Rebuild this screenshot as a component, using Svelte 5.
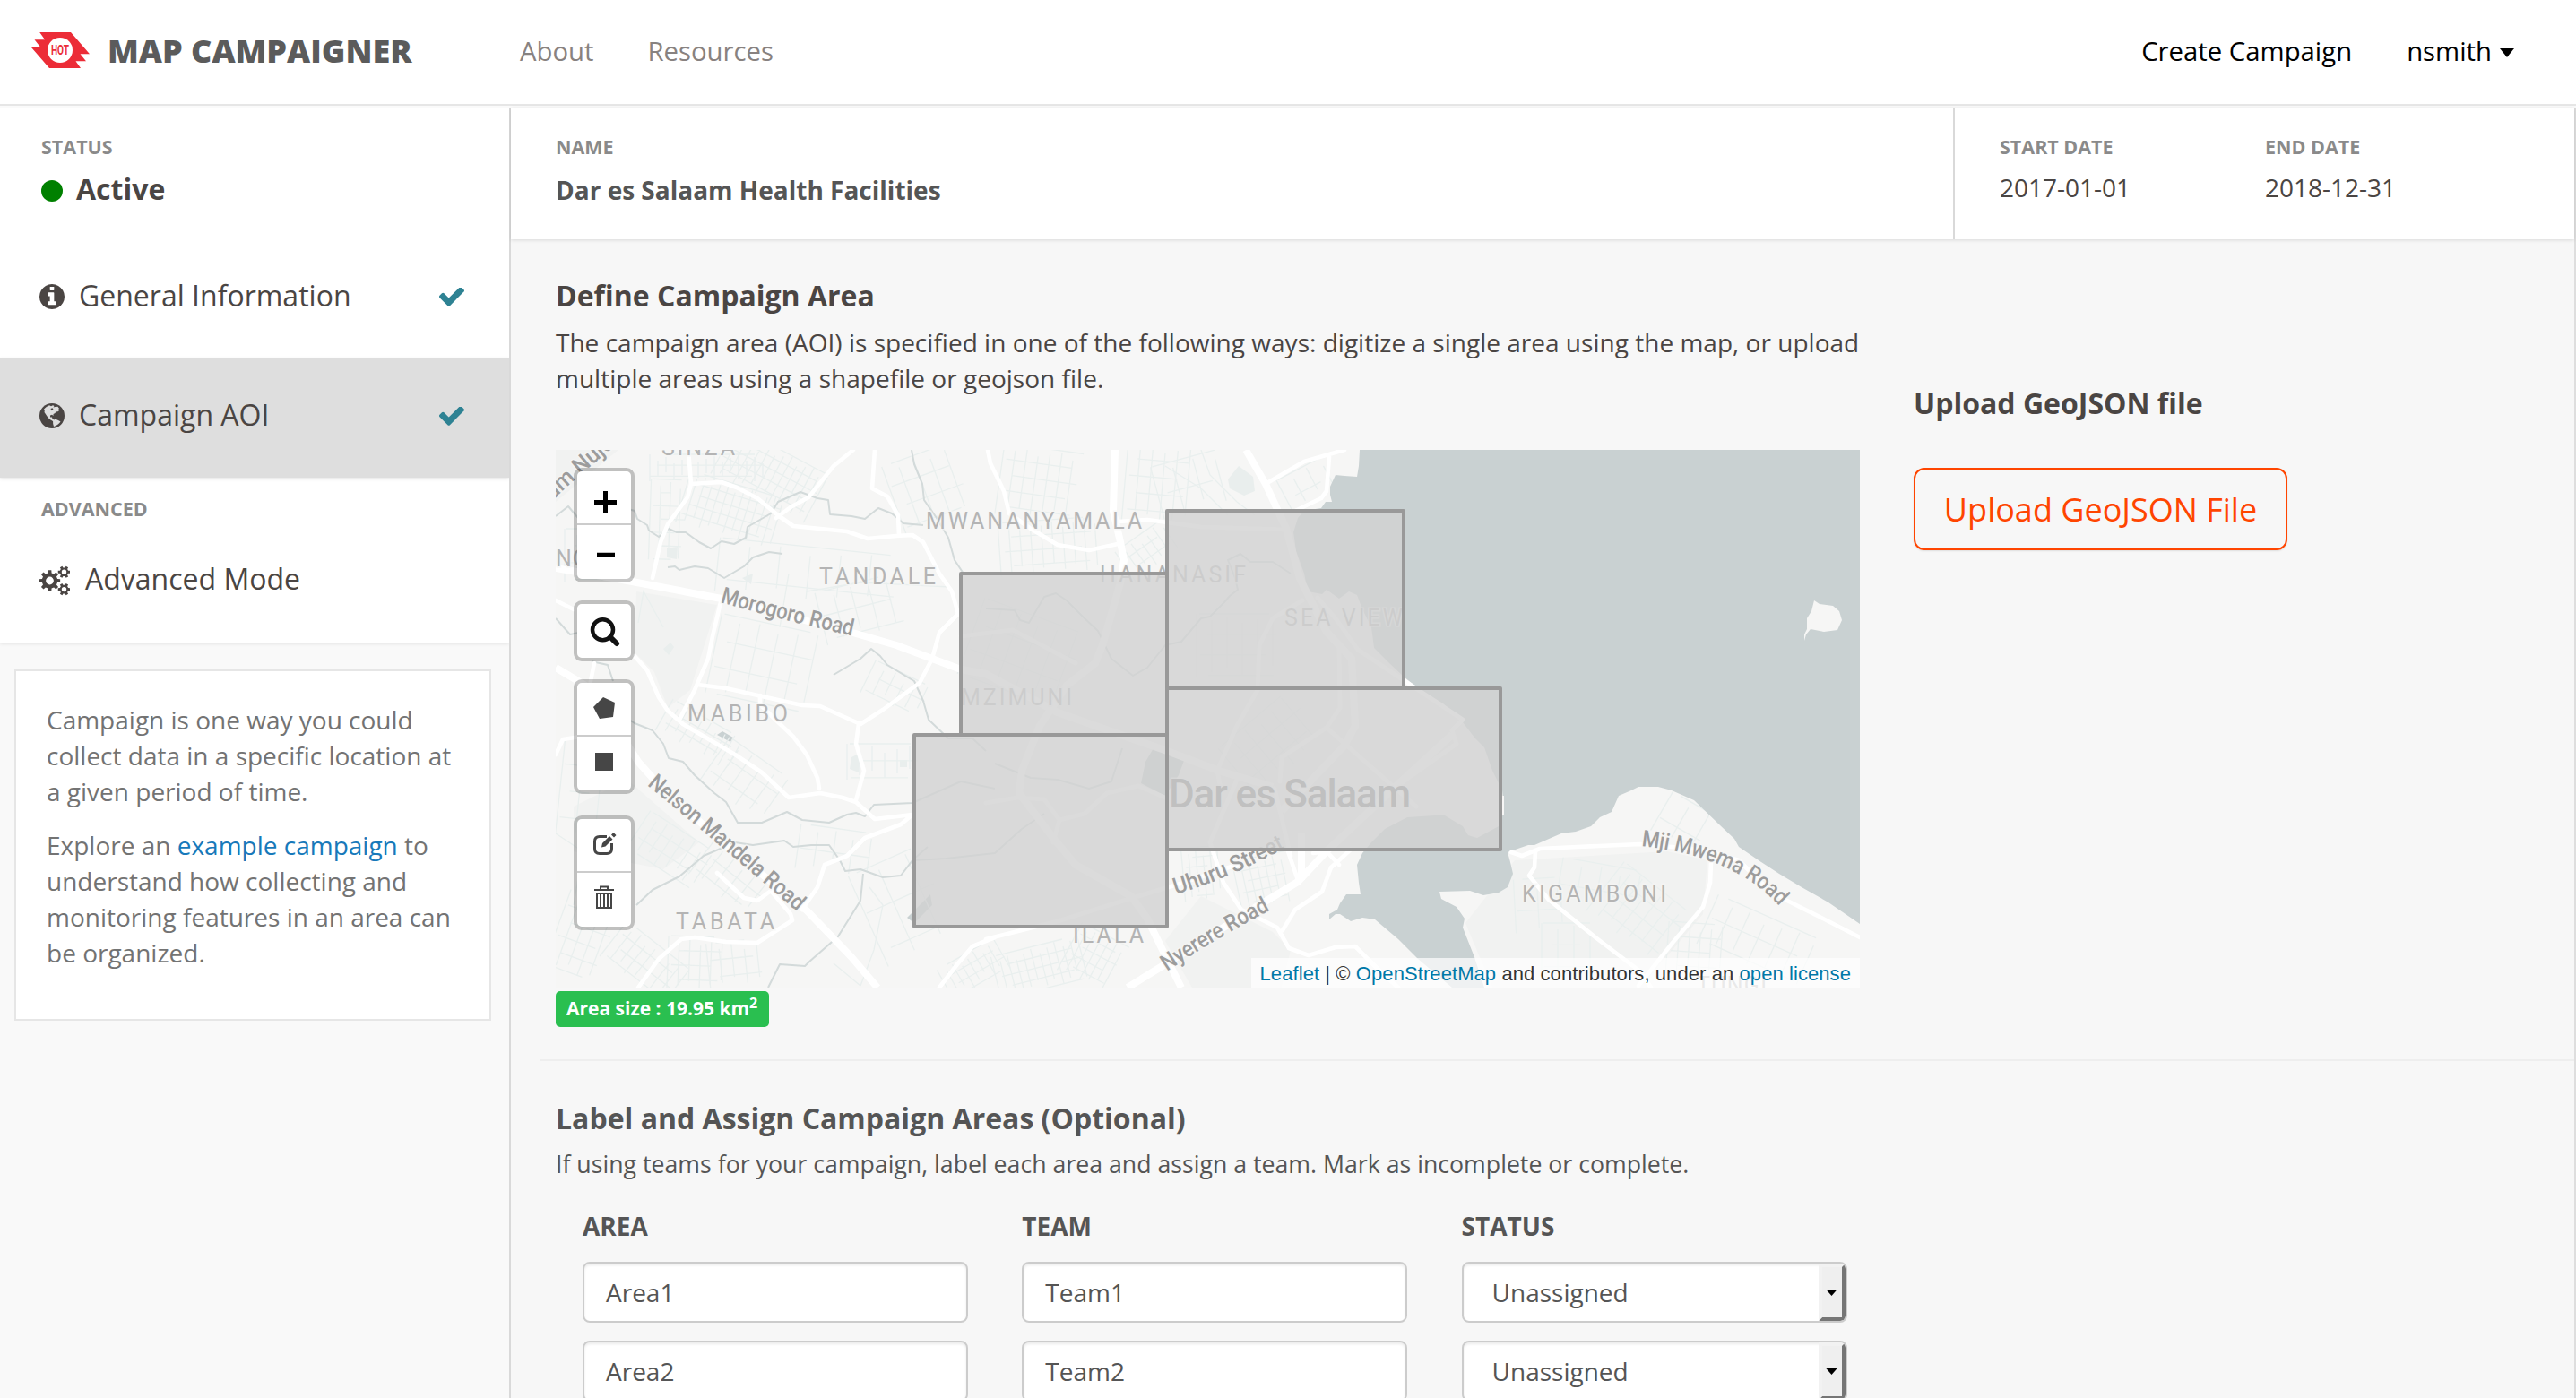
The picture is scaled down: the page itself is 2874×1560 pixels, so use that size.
<script>
  const areas = [
    { area: 'Area1', team: 'Team1', status: 'Unassigned' },
    { area: 'Area2', team: 'Team2', status: 'Unassigned' }
  ];

  // Outline of a toothed wheel with a round hole, for the settings icon.
  function gear(cx, cy, outer, root, hole, teeth) {
    const step = (Math.PI * 2) / teeth;
    const pt = (r, a) => `${(cx + r * Math.cos(a)).toFixed(2)} ${(cy + r * Math.sin(a)).toFixed(2)}`;
    const pts = [];
    for (let i = 0; i < teeth; i++) {
      const a = i * step;
      pts.push(pt(root, a - step * 0.3), pt(outer, a - step * 0.2), pt(outer, a + step * 0.2), pt(root, a + step * 0.3));
    }
    return `M${pts.join('L')}Z M${cx - hole} ${cy}a${hole} ${hole} 0 1 0 ${hole * 2} 0a${hole} ${hole} 0 1 0 ${-hole * 2} 0Z`;
  }

  const land = '#f6f6f5';
  const water =
    'M1517 502L1516 520L1514 532L1500 531L1490 530L1484 543L1484 552L1486 560L1479 560L1474 567L1455 570L1448 578L1443 594L1446 615L1455 640L1459 660L1475 663L1480 658L1494 668L1505 660L1514 664L1520 680L1530 700L1533 723L1550 740L1566 755L1582 768L1590 773L1610 785L1632 806L1645 823L1656 834L1665 860L1676 882L1678 905L1672 922L1648 935L1638 932L1632 922L1612 910L1600 910L1570 912L1545 925L1530 940L1520 952L1514 965L1516 985L1518 998L1502 998L1495 1008L1492 1015L1483 1020L1483 1026L1490 1020L1495 1020L1507 1028L1520 1024L1534 1026L1560 1048L1582 1070L1620 1102L1656 1102L1645 1068L1632 1035L1634 1025L1625 1012L1608 1003L1606 995L1640 994L1655 999L1672 996L1682 990L1688 975L1685 962L1682 951L1705 943L1712 943L1742 930L1758 928L1775 922L1785 912L1798 906L1806 888L1820 882L1828 878L1850 878L1865 882L1890 893L1918 920L1935 936L1940 945L1965 962L1985 975L2010 990L2040 1007L2075 1031L2075 502Z';
  const island = 'M2024 670L2030 674L2045 676L2052 682L2055 692L2050 703L2035 705L2020 702L2015 708L2013 715L2013 708L2016 702L2016 690L2021 682Z';

  const streams = [
    'M620 576L634 565L645 578L672 566',
    'M690 565L708 570L711 579L722 586L724 592L735 599L746 590L755 594L765 594L780 605L793 612L805 604L819 607L832 600L834 588L860 573L868 560L893 549L912 556L924 558L926 574L950 576L965 579L980 567L995 573L1008 584L1030 586',
    'M745 633L753 632L758 636L775 632L790 634L808 645L830 632L840 622L858 616L873 618',
    'M1017 502L1020 518L1029 540L1031 558L1045 578L1058 600L1065 625L1075 640',
    'M930 753L945 744L960 735L972 724L982 732L990 742L1020 760L1030 782L1036 803L1058 824L1085 824L1100 838',
    'M620 690L636 708L650 705',
    'M660 738L678 742L684 760M690 795L708 807L728 815L740 830L746 846L762 850L775 865L797 885L810 895L823 918L850 918L878 906L895 915L925 918L945 909L955 907L965 911L975 898L1018 896L1072 872L1110 880',
    'M710 1010L728 993L758 978L785 955L820 940L840 943L875 938L885 945L905 943L925 943L937 960L943 972L960 970L985 979L1005 977L1018 960L1035 945',
    'M963 975L960 1005L935 1045L903 1073L898 1078L870 1076L857 1102',
    'M1100 679L1132 681L1138 692L1148 695L1165 666L1178 662L1190 670L1210 690L1225 704L1240 735L1264 754L1280 745L1300 720L1318 716L1340 690L1350 688L1366 672L1372 665L1381 658L1378 645L1370 625L1384 618L1395 627L1420 627L1440 640',
    'M1110 852L1150 868L1180 870L1215 880L1240 872L1252 835',
    'M1020 960L1055 958L1110 952L1140 925L1165 908'
  ];

  const roads = [
    'M768 502L771 540L767 555L745 585L737 605L728 645',
    'M771 540L805 538L822 544L845 556L868 575L885 587L945 593L968 601L1000 598L1018 597L1030 605L1048 640L1062 660L1069 685L1048 706L1040 735L1026 762L985 792L960 808L915 788L895 787L850 777L810 768L778 764',
    'M952 502L930 520L902 555L882 566L866 578',
    'M976 502L973 545L990 554L1002 575L1003 597',
    'M804 672L795 710L790 735L775 770L758 803',
    'M620 670L640 680M708 732L722 748L735 778L745 793L762 808L820 842L850 862L880 890L915 885L940 890L955 895L976 914L1018 909L1005 920L965 935L945 955L920 965L912 990L895 1015',
    'M958 808L955 830L964 860L955 893',
    'M862 800L885 822L900 842L912 868L914 880M848 776L848 786L862 800',
    'M658 765L663 740M620 842L628 825L648 822',
    'M800 974L830 1002L845 1005L860 994L882 1020L884 1027L845 1052L810 1051L775 1046L760 1048L735 1070L712 1102',
    'M1110 1046L1085 1056L1068 1076L1048 1102M1100 1048L1180 1028L1260 1003L1320 985L1380 965',
    'M1102 502L1105 517L1120 548L1126 573L1150 590L1180 608L1215 614L1247 607',
    'M1247 582L1280 580L1340 588L1435 591',
    'M1412 540L1455 515L1500 502M1483 510L1480 548L1474 556L1445 570',
    'M1470 667L1490 690L1515 725L1560 755L1632 803L1620 815L1625 830L1540 890',
    'M1453 670L1420 690L1405 720L1403 770L1380 810L1358 860L1362 880M1494 720L1495 790L1480 812L1430 845L1428 872',
    'M1072 710L1130 703L1200 740M1380 870L1350 940L1365 985L1385 1015L1425 1035L1438 1058L1460 1066L1490 1057L1512 1056L1540 1084L1560 1102',
    'M1431 1038L1445 1015L1475 995L1485 968L1507 948',
    'M1437 950L1448 982M1465 952L1480 950L1494 965M1422 880L1440 955M1480 812L1580 900',
    'M1100 896L1135 890L1165 892L1182 915L1210 908L1235 885L1270 877L1300 890M1182 915L1175 940',
    'M1686 951L1698 955L1718 947L1760 945L1830 942L1900 948L1940 960L1965 985L1990 1003L2030 1023L2075 1046',
    'M1713 950L1712 968L1706 977L1728 1004L1780 1046L1830 1084L1842 1102',
    'M1909 962L1908 985L1900 1012L1866 1052L1828 1100'
  ];
  const highways = [
    'M620 634L700 648L805 668L955 707L1000 720L1072 747L1100 752L1180 795L1302 838L1360 860L1420 878',
    'M620 745L655 766L690 815L712 850L728 868L800 935L900 1016L950 1068L979 1102',
    'M1244 502L1242 570L1250 605L1254 625L1250 650L1230 720L1222 740L1190 765L1160 810L1140 860L1137 885L1175 935L1200 965L1262 1000L1280 1025L1298 1062L1318 1102',
    'M1390 502L1412 540L1435 590L1450 645L1480 705L1508 735L1512 810L1500 832L1430 905',
    'M1258 1102L1300 1076L1400 1013L1448 984L1480 950L1560 875L1620 820M1452 982L1452 930'
  ];

  // Patches of small streets: centre, size, rotation and spacing.
  const patches = [
    [790, 522, 130, 30, 0, 9], [860, 530, 120, 60, 28, 9], [745, 580, 40, 90, 2, 11], [815, 570, 110, 60, 17, 9],
    [1035, 545, 80, 80, -20, 18], [1160, 540, 90, 80, 8, 13], [1170, 610, 110, 60, -4, 12], [1290, 540, 70, 90, 5, 14],
    [1280, 615, 60, 40, -35, 10], [1330, 540, 80, 60, -15, 24], [1460, 540, 60, 40, -28, 18], [900, 640, 200, 60, 6, 34],
    [850, 740, 110, 90, 12, 22], [960, 680, 90, 60, -14, 20], [1000, 770, 70, 40, 26, 13], [780, 820, 90, 40, 30, 10],
    [830, 870, 80, 60, 35, 16], [985, 850, 80, 40, 0, 14], [750, 950, 90, 50, 33, 12], [815, 980, 80, 50, 38, 15],
    [650, 1045, 60, 90, 20, 13], [720, 1075, 90, 50, 38, 11], [775, 1075, 60, 60, 2, 12], [820, 1075, 60, 50, -6, 14],
    [935, 950, 90, 50, 8, 20], [1010, 1010, 90, 110, -24, 34], [1090, 1080, 80, 40, -30, 9], [1160, 1080, 100, 50, -14, 9],
    [1220, 1070, 60, 60, 28, 9], [1340, 975, 40, 60, -5, 8], [1410, 985, 60, 60, -12, 9], [655, 620, 50, 60, 0, 14],
    [650, 880, 50, 110, 6, 22], [1750, 1060, 60, 60, 0, 18], [1830, 1020, 100, 70, 38, 14], [1790, 985, 100, 40, 10, 22],
    [1960, 1050, 120, 60, 24, 20], [1890, 1060, 60, 60, 4, 12], [1880, 920, 60, 50, 30, 24], [1720, 1010, 60, 60, -3, 26],
    [1140, 730, 120, 90, 20, 22], [1380, 720, 90, 70, 0, 17], [1420, 830, 100, 70, -40, 18]
  ];
  function hatch([x, y, w, h, , s]) {
    let d = '';
    let i = 0;
    for (let a = -w / 2; a <= w / 2; a += s, i++) d += `M${x + a} ${y - h / 2 + ((i * 7) % 11)}V${y + h / 2 - ((i * 5) % 13)}`;
    for (let b = -h / 2; b <= h / 2; b += s * 1.35, i++) d += `M${x - w / 2 + ((i * 9) % 17)} ${y + b}H${x + w / 2 - ((i * 11) % 19)}`;
    return d;
  }

  const districts = [
    ['SINZA', 738, 508, 82], ['MWANANYAMALA', 1033, 590, 241], ['TANDALE', 914, 652, 130], ['MABIBO', 767, 805, 112],
    ['HANANASIF', 1227, 650, 163], ['SEA VIEW', 1433, 698, 132], ['MZIMUNI', 1072, 787, 124], ['TABATA', 754, 1037, 110],
    ['ILALA', 1197, 1052, 79], ['KIGAMBONI', 1698, 1006, 161], ['TUNGI', 1893, 1108, 78], ['NGO', 620, 632, 54]
  ];
  const streets = [
    ['sam', 'M617 558Q650 525 740 455', 'am Nujoma', 128],
    ['morogoro', 'M803 672Q880 694 953 710', 'Morogoro Road', 152],
    ['mandela', 'M722 876Q802 942 888 1016', 'Nelson Mandela Road', 219],
    ['uhuru', 'M1312 998Q1370 981 1436 945', 'Uhuru Street', 133],
    ['nyerere', 'M1302 1084Q1355 1048 1420 1014', 'Nyerere Road', 134],
    ['mji', 'M1831 944Q1935 955 1986 1012', 'Mji Mwema Road', 172]
  ];

  const check =
    'M1671 566q0 40-28 68l-724 724-136 136q-28 28-68 28t-68-28l-136-136-362-362q-28-28-28-68t28-68l136-136q28-28 68-28t68 28l294 295 656-657q28-28 68-28t68 28l136 136q28 28 28 68z';
</script>

<div class="page">
  <header>
    <svg class="logo" viewBox="34 35 67 42">
      <path fill="#ec2c37" d="M44.2 36L50 44.3H38.5L44.8 52.3H34.4L55 76H90L84.5 68.3H96L89.5 60.3H100L79 36Z" />
      <circle cx="67" cy="56" r="14" fill="#fff" />
      <text x="57" y="61.3" textLength="20" lengthAdjust="spacingAndGlyphs">HOT</text>
    </svg>
    <div class="brand">MAP CAMPAIGNER</div>
    <nav>
      <span>About</span>
      <span>Resources</span>
    </nav>
    <div class="account">
      <span>Create Campaign</span>
      <span class="user">nsmith<i class="caret"></i></span>
    </div>
  </header>

  <div class="body">
    <aside>
      <div class="panel">
        <div class="status">
          <div class="caption">STATUS</div>
          <div class="active"><i class="dot"></i>Active</div>
        </div>
        <div class="item">
          <svg class="ico" viewBox="128 128 1536 1536"><path d="M1152 1376v-160q0-14-9-23t-23-9h-96v-512q0-14-9-23t-23-9h-320q-14 0-23 9t-9 23v160q0 14 9 23t23 9h96v320h-96q-14 0-23 9t-9 23v160q0 14 9 23t23 9h448q14 0 23-9t9-23zm-128-896v-160q0-14-9-23t-23-9h-192q-14 0-23 9t-9 23v160q0 14 9 23t23 9h192q14 0 23-9t9-23zm640 416q0 209-103 385.5t-279.5 279.5-385.5 103-385.5-103-279.5-279.5-103-385.5 103-385.5 279.5-279.5 385.5-103 385.5 103 279.5 279.5 103 385.5z" /></svg>
          <span>General Information</span>
          <svg class="check" viewBox="121 398 1550 1124"><path d={check} /></svg>
        </div>
        <div class="item selected">
          <svg class="ico" viewBox="0 0 28 28">
            <circle cx="14" cy="14" r="14" />
            <path fill="#dedede" d="M5 6.5Q7.500 3.500 11 2.300L13 3.200L15 2.300L16.500 3L15.500 4.500L17.500 4L20.500 3.800L22 6L20.500 7.500L22 8.300L20 9.500L18.500 9L17.500 11L15.500 12L15.500 14L14 12.800L12 13.500L12 15.500L14 15.500L14.500 17.500L16.500 18.500L15 20L12.500 18.500L9.500 16L7.500 13L5.500 10L5.800 8Z" />
            <path fill="#dedede" d="M15 19L18 17.800L21 19L23.500 20.500Q21 24.500 16 25.900L15.200 23Z" />
            <path fill="#4a4543" d="M12.500 6L14.500 5.200L15.500 7L13.500 8.300Z" />
          </svg>
          <span>Campaign AOI</span>
          <svg class="check" viewBox="121 398 1550 1124"><path d={check} /></svg>
        </div>
        <div class="caption advanced">ADVANCED</div>
        <div class="item mode">
          <svg class="cogs" viewBox="44 631 34 34" fill-rule="evenodd">
            <path d={gear(55.5, 648, 11.8, 8.8, 4.4, 8)} />
            <path d={gear(71.5, 638.3, 6.9, 4.9, 2.7, 6)} />
            <path d={gear(71.5, 657.6, 6.9, 4.9, 2.7, 6)} />
          </svg>
          <span>Advanced Mode</span>
        </div>
      </div>
      <div class="help">
        <p>Campaign is one way you could collect data in a specific location at a given period of time.</p>
        <p>Explore an <a href="#example">example campaign</a> to understand how collecting and monitoring features in an area can be organized.</p>
      </div>
    </aside>

    <main>
      <div class="summary">
        <div class="name">
          <div class="caption">NAME</div>
          <div class="value strong">Dar es Salaam Health Facilities</div>
        </div>
        <div class="dates">
          <div class="date">
            <div class="caption">START DATE</div>
            <div class="value">2017-01-01</div>
          </div>
          <div class="date">
            <div class="caption">END DATE</div>
            <div class="value">2018-12-31</div>
          </div>
        </div>
      </div>

      <section class="define">
        <div class="left">
          <h2 class="dark">Define Campaign Area</h2>
          <p class="dark">The campaign area (AOI) is specified in one of the following ways: digitize a single area using the map, or upload multiple areas using a shapefile or geojson file.</p>
          <div class="map">
            <svg class="tiles" viewBox="620 502 1455 600">
              <rect x="620" y="502" width="1455" height="600" fill={land} />
              <g fill="#f1f2f1">
                <path d="M710 660L800 675L770 770L745 790L730 750L708 728Z" />
                <path d="M1340 1000L1420 1040L1440 1060L1430 1102H1330L1300 1050Z" />
                <path d="M1690 960L1860 950L1905 960L1900 1020L1830 1102H1665L1635 1030Z" />
                <path d="M620 502H690L620 560ZM640 900L700 870L780 940L740 970L640 950Z" />
              </g>
              <g fill="#e9eeed">
                <path d="M1370 535L1382 520L1398 532L1400 548L1388 553L1372 545Z" />
                <path d="M744 612L756 610L755 624L744 622ZM740 724L748 717L752 722L746 731ZM828 645L840 640L838 652Z" />
                <path d="M950 845L960 840L958 862L948 858ZM1004 848H1012V856H1004Z" />
              </g>
              <path fill="#c9d1d2" d="M800 820L806 816L818 823L815 828ZM1012 1024L1038 998L1040 1010L1020 1030Z" />
              <path fill="#c3cccd" d="M1288 833L1322 846L1315 865L1300 888L1273 874L1278 850Z" />
              <g fill="none" stroke="#e9efee" stroke-width="1.3">
                {#each patches as p}
                  <path d={hatch(p)} transform={`rotate(${p[4]} ${p[0]} ${p[1]})`} />
                {/each}
                <path d="M900 660L960 650L1060 655M870 700L880 640M740 700L718 660L712 695M960 1100L975 1060L985 1010L970 990M620 930L650 950L640 1010M930 1075L960 1100M1340 502L1350 530L1380 560L1400 575M1300 520L1340 545L1370 575" />
              </g>
              <path fill="#c9d1d2" d={water} />
              <path fill={land} d={island} />
              <path fill={land} d="M1674 820H1674V888H1678V910H1674Z" />
              <g fill="none" stroke="#d3dada" stroke-width="2" stroke-linejoin="round">
                {#each streams as d}<path {d} />{/each}
              </g>
              <g fill="none" stroke="#fff" stroke-width="4.600" stroke-linejoin="round" stroke-linecap="round">
                {#each roads as d}<path {d} />{/each}
              </g>
              <g fill="none" stroke="#fff" stroke-width="8" stroke-linejoin="round">
                {#each highways as d}<path {d} />{/each}
              </g>
              <g class="district">
                {#each districts as [label, x, y, w]}
                  <text {x} {y} textLength={w}>{label}</text>
                {/each}
              </g>
              <g class="street">
                {#each streets as [id, d, label, w]}
                  <path {id} {d} fill="none" stroke="none" />
                  <text textLength={w} lengthAdjust="spacingAndGlyphs"><textPath href={`#${id}`} textLength={w} lengthAdjust="spacingAndGlyphs">{label}</textPath></text>
                {/each}
              </g>
              <text class="city" x="1304" y="901" textLength="270">Dar es Salaam</text>
              <g fill="#d2d2d2" fill-opacity="0.8" stroke="#999" stroke-width="4" stroke-linejoin="round">
                <rect x="1072" y="640" width="230" height="180" />
                <rect x="1302" y="570" width="264" height="198" />
                <rect x="1302" y="768" width="372" height="180" />
                <rect x="1020" y="820" width="282" height="214" />
              </g>
            </svg>
            <div class="controls">
              <div class="bar">
                <svg viewBox="0 0 60 58"><path d="M19 34.500H44M31.500 22V46.500" stroke="#000" stroke-width="5" fill="none" /></svg>
                <svg viewBox="0 0 60 60"><path d="M22 33H42" stroke="#000" stroke-width="4.500" /></svg>
              </div>
              <div class="bar">
                <svg viewBox="0 0 60 60"><circle cx="28.500" cy="28.700" r="11.500" fill="none" stroke="#111" stroke-width="4.500" /><path d="M37 37L44 44" stroke="#111" stroke-width="6" stroke-linecap="round" /></svg>
              </div>
              <div class="bar">
                <svg viewBox="0 0 60 58"><path fill="#464646" d="M29 16L42 22L40 38L25 40L18 27Z" /></svg>
                <svg viewBox="0 0 60 60"><path fill="#464646" d="M20 18H40V38H20Z" /></svg>
              </div>
              <div class="bar last">
                <svg viewBox="0 0 60 58">
                  <path d="M33 19.500H25Q19.500 19.500 19.500 25V33Q19.500 38.500 25 38.500H33Q38.500 38.500 38.500 33V27" fill="none" stroke="#464646" stroke-width="3" />
                  <path fill="#464646" d="M27 31.500L28 27L36 19L39.500 22.500L31.500 30.500ZM38 17.500L40.500 15L43.500 18L41 20.500Z" />
                </svg>
                <svg viewBox="0 0 60 60">
                  <path d="M19 19H41M26 18V15.500H34V18" fill="none" stroke="#464646" stroke-width="2" />
                  <path d="M22 23H38V39H22ZM26 23V39M30 23V39M34 23V39" fill="none" stroke="#464646" stroke-width="2" />
                </svg>
              </div>
            </div>
            <div class="attribution"><a href="#leaflet">Leaflet</a> | © <a href="#osm">OpenStreetMap</a> and contributors, under an <a href="#license">open license</a></div>
          </div>
          <div class="badge">Area size : 19.95 km<sup>2</sup></div>
        </div>
        <div class="right">
          <h2 class="dark">Upload GeoJSON file</h2>
          <button>Upload GeoJSON File</button>
        </div>
      </section>

      <section class="assign">
        <h2>Label and Assign Campaign Areas (Optional)</h2>
        <p>If using teams for your campaign, label each area and assign a team. Mark as incomplete or complete.</p>
        <div class="table">
          <div class="th">AREA</div>
          <div class="th">TEAM</div>
          <div class="th">STATUS</div>
          {#each areas as row}
            <div class="field">{row.area}</div>
            <div class="field">{row.team}</div>
            <div class="field select"><span>{row.status}</span><i class="arrow"><svg viewBox="0 0 14 8"><path d="M0 0H14L7 8Z" /></svg></i></div>
          {/each}
        </div>
      </section>
    </main>
  </div>
</div>

<style>
  :global(body) { margin: 0; overflow: hidden; }
  .page {
    width: 2874px; height: 1560px; overflow: hidden;
    display: flex; flex-direction: column;
    font: 28px/40px "Open Sans", "Noto Sans", sans-serif;
    color: #555; background: #f7f7f7;
  }
  .page :global(*) { box-sizing: border-box; }
  h2, p { margin: 0; }
  a { color: #1779ba; text-decoration: none; }

  header {
    flex: none; height: 120px; padding: 0 69px 6px 34px;
    display: flex; align-items: center;
    background: linear-gradient(#fff 116px, #e6e6e6 116px, #e6e6e6 118px, #fafafa 118px);
  }
  .logo { width: 67px; height: 42px; margin-top: -2px; }
  .logo text { font: 700 15px Roboto, sans-serif; fill: #ec2c37; }
  .brand { margin-left: 19px; font-size: 36px; font-weight: 800; color: #5b5b5b; white-space: nowrap; width: 460px; }
  nav { display: flex; gap: 60px; font-size: 29.300px; color: #888280; }
  .account { margin-left: auto; display: flex; gap: 61px; font-size: 29.300px; color: #000; }
  .user { display: flex; align-items: center; gap: 9px; }
  .caret { border: 8.500px solid transparent; border-top: 10px solid #000; border-bottom: 0; margin-top: 3px; }

  .body { flex: 1; min-height: 0; display: flex; }
  aside { flex: none; width: 570px; border-right: 2px solid #d9d9d9; background: #f9f9f9; }
  .panel { background: #fff; height: 597px; box-shadow: 0 1px 4px rgba(0, 0, 0, .12); clip-path: inset(0 0 -6px 0); }
  .caption { font-size: 21.500px; line-height: 30px; font-weight: 700; color: #8a8a8a; }
  .status { height: 147px; padding: 29px 0 0 46px; }
  .active { display: flex; align-items: center; gap: 15px; margin-top: 12px; font-size: 32px; font-weight: 700; color: #4a4543; }
  .dot { width: 24px; height: 24px; border-radius: 50%; background: #008000; margin-top: 4px; }
  .item { height: 133px; padding: 43px 50px 0 44px; display: flex; align-items: flex-start; font-size: 32px; color: #4a4543; }
  .selected { background: #dedede; box-shadow: 0 1px 4px rgba(0, 0, 0, .12); }
  .ico { width: 28px; height: 28px; margin: 7px 16px 0 0; fill: #4a4543; }
  .cogs { width: 34px; height: 34px; margin: 5px 17px 0 0; fill: #4a4543; }
  .check { width: 28px; height: 21px; margin: 11px 0 0 auto; fill: #2e8293; }
  .advanced { padding: 20px 0 0 46px; height: 50px; }
  .mode { height: auto; }
  .help {
    margin: 30px 20px 0 16px; height: 392px; padding: 34px 34px 0 34px;
    background: #fff; border: 2px solid #e6e6e6; color: #737373;
  }
  .help p { margin-bottom: 20px; }

  main { flex: 1; border-right: 2px solid #dedede; }
  .summary { height: 147px; display: flex; background: #fff; box-shadow: 0 1px 4px rgba(0, 0, 0, .12); }
  .name { width: 1609px; padding: 29px 0 0 50px; }
  .dates { flex: 1; padding: 29px 0 0 50px; border-left: 2px solid #d9d9d9; display: flex; }
  .date { width: 296px; }
  .value { margin-top: 10px; color: #4a4543; }
  .strong { font-weight: 700; margin-top: 13px; color: #555; }

  h2 { font-size: 32px; font-weight: 700; line-height: 44px; }
  .dark { color: #4a4543; }
  .define { display: flex; height: 915px; padding: 41px 0 0 50px; }
  .left { width: 1455px; }
  .left p { margin-top: 10px; height: 80px; letter-spacing: .015px; }
  .right { margin-left: 60px; padding-top: 120px; }
  button {
    display: block; margin-top: 50px; width: 417px; height: 92px; padding: 0;
    border: 2px solid #ff4500; border-radius: 12px; background: transparent;
    box-shadow: 0 1px 2px rgba(0, 0, 0, .1);
    font: 36px "Open Sans", sans-serif; color: #ff4500;
  }
  .map { position: relative; width: 1455px; height: 600px; margin-top: 60px; overflow: hidden; }
  .tiles { display: block; width: 1455px; height: 600px; }
  .district { font: 400 25px Roboto, sans-serif; fill: #b4b4b4; }
  .street { font: 500 25.500px Roboto, sans-serif; fill: #9c9c9c; }
  .street text, .district text, .city { paint-order: stroke; stroke: rgba(246, 246, 245, .7); stroke-width: 3px; }
  .city { font: 500 44px Roboto, sans-serif; fill: #777; }
  .controls { position: absolute; left: 20px; top: 20px; display: flex; flex-direction: column; gap: 20px; }
  .bar { width: 68px; border: 4px solid rgba(0, 0, 0, .22); border-radius: 9px; background: #fff; background-clip: padding-box; display: flex; flex-direction: column; }
  .bar svg { display: block; width: 60px; height: 60px; }
  .bar svg:first-child:not(:last-child) { border-bottom: 2px solid #ccc; }
  .last { margin-top: 4px; }
  .attribution {
    position: absolute; right: 0; bottom: 0; height: 33px; padding: 0 10px; background: rgba(255, 255, 255, .7);
    font: 22px/35px "Liberation Sans", Arial, sans-serif; letter-spacing: .08px; color: #333; white-space: nowrap;
  }
  .attribution a { color: #0078a8; }
  .badge {
    display: inline-block; margin-top: 4px; width: 238px; height: 40px; padding: 0 12px; border-radius: 5px;
    background: #2abf50; color: #fff; font-size: 21px; font-weight: 700; line-height: 39px; white-space: nowrap;
  }
  sup { font-size: 16px; line-height: 0; vertical-align: baseline; position: relative; top: -8px; }

  .assign { margin-left: 32px; padding: 42px 0 0 18px; border-top: 2px solid #eee; }
  .assign p { margin-top: 9px; font-size: 26.700px; }
  .table { margin: 28px 0 0 30px; display: grid; grid-template-columns: repeat(3, 430px); gap: 19px 60.300px; grid-auto-rows: 68px; grid-template-rows: 42px; row-gap: 20px; }
  .th { font-weight: 700; line-height: 42px; height: 41px; }
  .field {
    height: 68px; margin-top: -1px; padding: 0 24px; border: 2px solid #ccc; border-radius: 8px; background: #fff; line-height: 65px;
    box-shadow: inset 0 2px 3px rgba(0, 0, 0, .08); color: #555; overflow: hidden;
  }
  .select { display: flex; justify-content: space-between; padding: 0 0 0 32px; }
  .arrow {
    width: 30px; background: #efefef; border: 4px solid #f2f2f2; border-right-color: #767676; border-bottom-color: #767676;
    display: flex; align-items: center; justify-content: center; border-radius: 0 5px 5px 0;
  }
  .arrow svg { width: 13px; height: 7px; }
</style>
